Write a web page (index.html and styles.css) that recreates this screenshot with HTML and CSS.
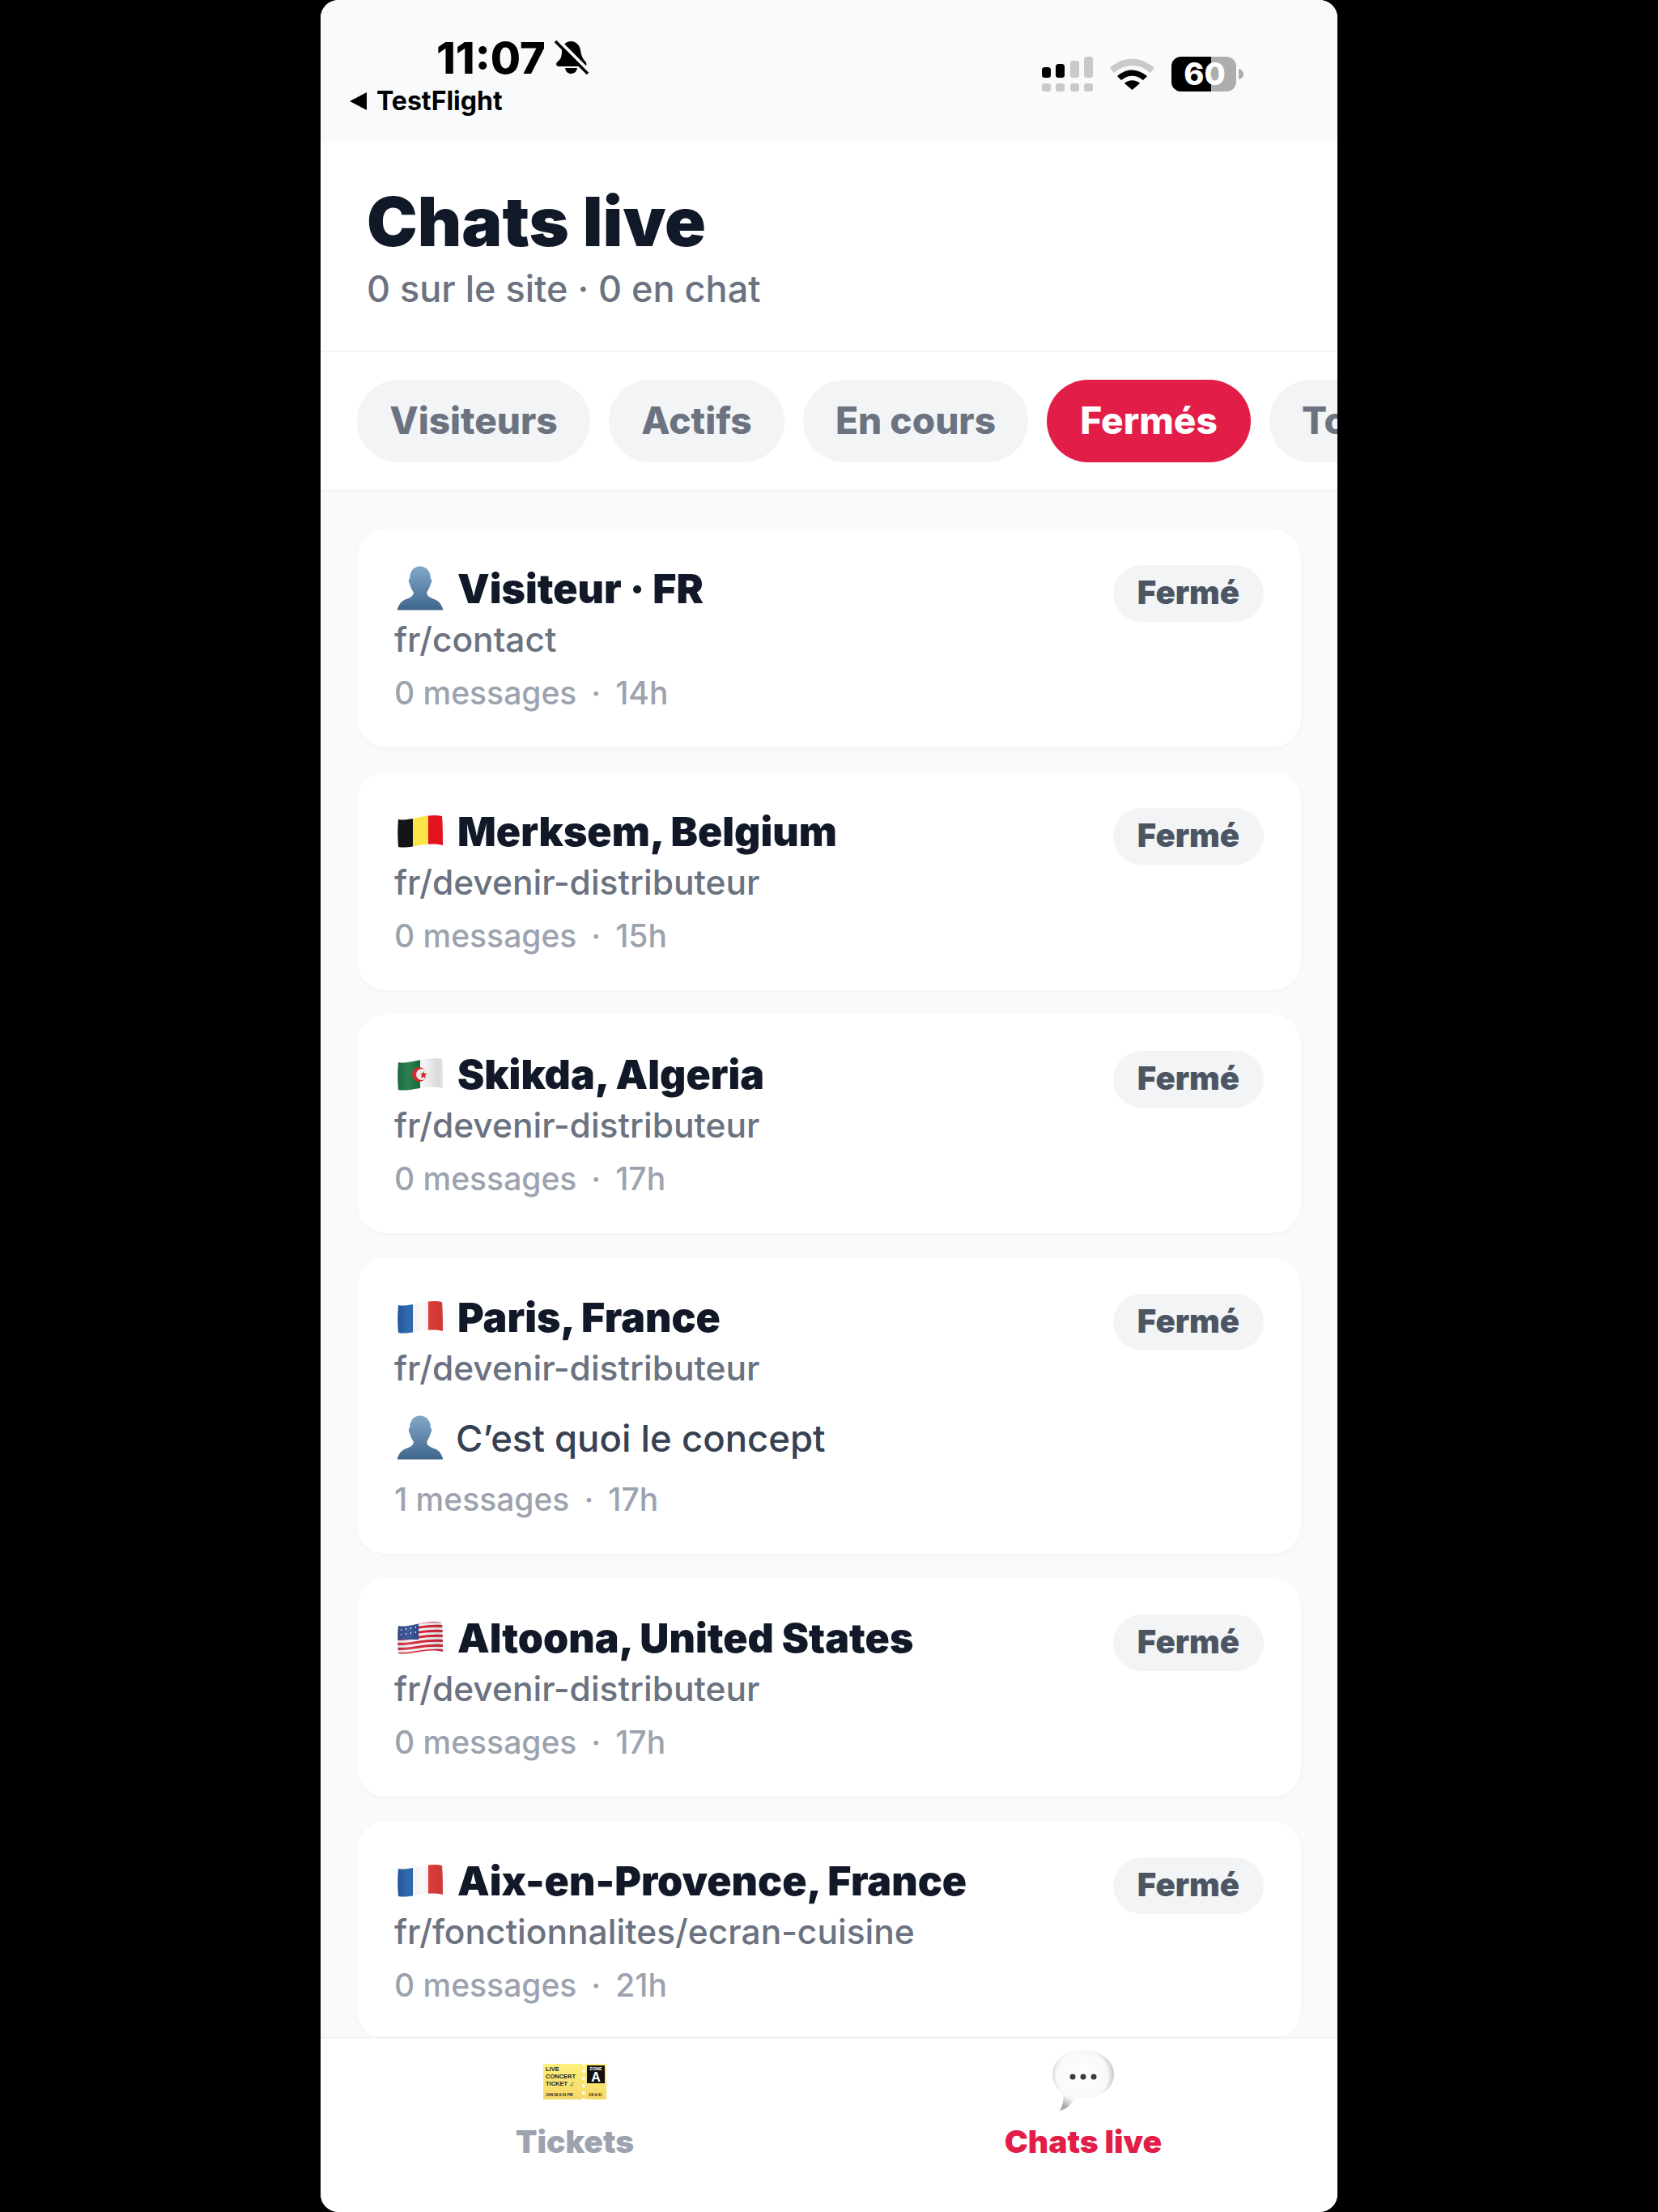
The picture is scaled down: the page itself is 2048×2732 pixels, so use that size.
FILE: index.html
```html
<!DOCTYPE html>
<html lang="fr">
<head>
    <meta charset="UTF-8">
    <title>Chats live</title>
    <link rel="stylesheet" href="styles.css">
</head>
<body>
    <svg class="defs" width="0" height="0">
        <defs>
            <linearGradient id="personGrad" x1="0" y1="0" x2="0" y2="1">
                <stop offset="0" stop-color="#82a9c9"/>
                <stop offset="1" stop-color="#3f668c"/>
            </linearGradient>
            <radialGradient id="bubbleGrad" cx="0.48" cy="0.42" r="0.58">
                <stop offset="0" stop-color="#ffffff"/>
                <stop offset="0.72" stop-color="#f8f8f8"/>
                <stop offset="1" stop-color="#a9a9a9"/>
            </radialGradient>
            <linearGradient id="ticketGrad" x1="0" y1="0" x2="0" y2="1">
                <stop offset="0" stop-color="#fdf07c"/>
                <stop offset="1" stop-color="#f6d868"/>
            </linearGradient>
            <linearGradient id="flagShade" x1="0" y1="0" x2="1" y2="0">
                <stop offset="0" stop-color="#000" stop-opacity="0.18"/>
                <stop offset="0.3" stop-color="#fff" stop-opacity="0.1"/>
                <stop offset="0.55" stop-color="#000" stop-opacity="0"/>
                <stop offset="0.85" stop-color="#000" stop-opacity="0.12"/>
                <stop offset="1" stop-color="#000" stop-opacity="0.04"/>
            </linearGradient>
            <clipPath id="wave">
                <path d="M5 9C20 12 38 1 59 5C60 16 60 30 60 41C38 36 20 46 5 43C4 32 4 20 5 9Z"/>
            </clipPath>
            <symbol id="person" viewBox="-3 0 70 62">
                <path fill="url(#personGrad)" d="M32 1C41 1 46 8 46 17C48 18 48 22 46 25C45 29 43 33 41 36C41 41 45 43 50 45C57 47 61 52 63 60H1C3 52 7 47 14 45C19 43 23 41 23 36C21 33 19 29 18 25C16 22 16 18 18 17C18 8 23 1 32 1Z"/>
            </symbol>
            <symbol id="flag-be" viewBox="0 0 64 48">
                <g clip-path="url(#wave)">
                    <rect width="23" height="48" fill="#141414"/>
                    <rect x="23" width="19" height="48" fill="#fde547"/>
                    <rect x="42" width="22" height="48" fill="#e2131f"/>
                </g>
            </symbol>
            <symbol id="flag-dz" viewBox="0 0 64 48">
                <g clip-path="url(#wave)">
                    <rect width="32" height="48" fill="#14713c"/>
                    <rect x="32" width="32" height="48" fill="#f6f6f6"/>
                    <circle cx="31" cy="24" r="9" fill="#d8232a"/>
                    <circle cx="34" cy="24" r="7" fill="#eef3ee"/>
                    <path d="M36 20l1.500 3 3.500 0-3 2 1 4-3-2-3 2 1-4-2-2 3 0z" fill="#d8232a"/>
                    <rect width="64" height="48" fill="url(#flagShade)"/>
                </g>
            </symbol>
            <symbol id="flag-fr" viewBox="0 0 64 48">
                <g clip-path="url(#wave)">
                    <rect width="23" height="48" fill="#1b5aa6"/>
                    <rect x="23" width="19" height="48" fill="#fafafa"/>
                    <rect x="42" width="22" height="48" fill="#e8403c"/>
                    <rect width="64" height="48" fill="url(#flagShade)"/>
                </g>
            </symbol>
            <symbol id="flag-us" viewBox="0 0 64 48">
                <g clip-path="url(#wave)">
                    <rect width="64" height="48" fill="#f4f4f4"/>
                    <path d="M0 7C20 10 38 0 64 4M0 13C20 16 38 6 64 10M0 19C20 22 38 12 64 16M0 25C20 28 38 18 64 22M0 31C20 34 38 24 64 28M0 37C20 40 38 30 64 34M0 43C20 46 38 36 64 40" fill="none" stroke="#d8283a" stroke-width="3"/>
                    <rect width="30" height="26" fill="#2b4a8f"/>
                    <path d="M8 14h1M14 13h1M20 12h1M26 11h1M8 20h1M14 19h1M20 18h1M26 17h1" stroke="#fff" stroke-width="2"/>
                    <rect width="64" height="48" fill="url(#flagShade)"/>
                </g>
            </symbol>
        </defs>
    </svg>

    <div class="phone">
        <div class="status">
            <div class="status-left">
                <div class="clock-row">
                    <span class="clock">11:07</span>
                    <svg class="bell" viewBox="0 0 44 44">
                        <path d="M21 2C27 2 32 6 33 13C34 20 36 24 39 27C41 29 41 33 38 33H6C3 33 2 29 5 27C9 24 10 20 10 14C10 7 15 2 21 2Z"/>
                        <path d="M14 35H29C28 40 25 42 21 42C18 42 15 40 14 35Z"/>
                        <path class="bell-gap" d="M5 0L45 40"/>
                        <path class="bell-slash" d="M2 2L42 42"/>
                    </svg>
                </div>
                <div class="back-row">
                    <span class="back-arrow"></span>
                    <span>TestFlight</span>
                </div>
            </div>
            <svg class="status-right" width="250" height="56" viewBox="0 0 250 56">
                <g fill="#000">
                    <rect x="0" y="13" width="11" height="13" rx="3.500"/>
                    <rect x="17" y="9" width="11" height="17" rx="3.500"/>
                </g>
                <g fill="#c9c9c9">
                    <rect x="35" y="5" width="11" height="21" rx="3"/>
                    <rect x="52" y="0" width="11" height="26" rx="3"/>
                    <rect x="0" y="33" width="11" height="10" rx="3"/>
                    <rect x="17" y="33" width="11" height="10" rx="3"/>
                    <rect x="35" y="33" width="11" height="10" rx="3"/>
                    <rect x="52" y="33" width="11" height="10" rx="3"/>
                </g>
                <path d="M84 14C100 -1 122 -1 139 14L134 20C120 8 103 8 89 20Z" fill="#c9c9c9"/>
                <path d="M93 24C104 14 118 14 130 24L125 29C116 22 107 22 98 29Z" fill="#000"/>
                <path d="M102 33C107 28 116 28 121 33L111.500 41Z" fill="#000"/>
                <rect x="160" y="0" width="80" height="43" rx="12" fill="#adadad"/>
                <path d="M172 0H209V43H172A12 12 0 0 1 160 31V12A12 12 0 0 1 172 0Z" fill="#000"/>
                <path d="M243 15C247 16 249 19 249 22C249 25 247 27 243 28Z" fill="#adadad"/>
                <text class="battery-text" x="201" y="35" text-anchor="middle">60</text>
            </svg>
        </div>

        <header class="top">
            <h1>Chats live</h1>
            <p>0 sur le site · 0 en chat</p>
        </header>

        <nav class="filters">
            <button class="chip">Visiteurs</button>
            <button class="chip">Actifs</button>
            <button class="chip">En cours</button>
            <button class="chip chip-on">Fermés</button>
            <button class="chip">Tous</button>
        </nav>

        <main class="list">
            <article class="card">
                <div class="card-head">
                    <div class="title">
                        <svg class="emoji person-big"><use href="#person"/></svg>
                        <span>Visiteur · FR</span>
                    </div>
                    <span class="badge">Fermé</span>
                </div>
                <div class="path">fr/contact</div>
                <div class="meta"><span>0 messages</span><i>·</i><span>14h</span></div>
            </article>

            <article class="card">
                <div class="card-head">
                    <div class="title">
                        <svg class="emoji"><use href="#flag-be"/></svg>
                        <span>Merksem, Belgium</span>
                    </div>
                    <span class="badge">Fermé</span>
                </div>
                <div class="path">fr/devenir-distributeur</div>
                <div class="meta"><span>0 messages</span><i>·</i><span>15h</span></div>
            </article>

            <article class="card">
                <div class="card-head">
                    <div class="title">
                        <svg class="emoji"><use href="#flag-dz"/></svg>
                        <span>Skikda, Algeria</span>
                    </div>
                    <span class="badge">Fermé</span>
                </div>
                <div class="path">fr/devenir-distributeur</div>
                <div class="meta"><span>0 messages</span><i>·</i><span>17h</span></div>
            </article>

            <article class="card">
                <div class="card-head">
                    <div class="title">
                        <svg class="emoji"><use href="#flag-fr"/></svg>
                        <span>Paris, France</span>
                    </div>
                    <span class="badge">Fermé</span>
                </div>
                <div class="path">fr/devenir-distributeur</div>
                <div class="message">
                    <svg class="emoji person-big"><use href="#person"/></svg>
                    <span>C’est quoi le concept</span>
                </div>
                <div class="meta"><span>1 messages</span><i>·</i><span>17h</span></div>
            </article>

            <article class="card">
                <div class="card-head">
                    <div class="title">
                        <svg class="emoji"><use href="#flag-us"/></svg>
                        <span>Altoona, United States</span>
                    </div>
                    <span class="badge">Fermé</span>
                </div>
                <div class="path">fr/devenir-distributeur</div>
                <div class="meta"><span>0 messages</span><i>·</i><span>17h</span></div>
            </article>

            <article class="card">
                <div class="card-head">
                    <div class="title">
                        <svg class="emoji"><use href="#flag-fr"/></svg>
                        <span>Aix-en-Provence, France</span>
                    </div>
                    <span class="badge">Fermé</span>
                </div>
                <div class="path">fr/fonctionnalites/ecran-cuisine</div>
                <div class="meta"><span>0 messages</span><i>·</i><span>21h</span></div>
            </article>
        </main>

        <footer class="tabbar">
            <div class="tab">
                <svg class="tab-icon" viewBox="0 0 80 80">
                    <rect x="1" y="19" width="78" height="44" fill="url(#ticketGrad)"/>
                    <rect x="55" y="21" width="22" height="22" fill="#111"/>
                    <text class="tk tk-zone" x="66" y="27">ZONE</text>
                    <text class="tk tk-a" x="66" y="41">A</text>
                    <text class="tk" x="4" y="28" text-anchor="start">LIVE</text>
                    <text class="tk" x="4" y="37" text-anchor="start">CONCERT</text>
                    <text class="tk" x="4" y="46" text-anchor="start">TICKET ♫</text>
                    <text class="tk tk-small" x="4" y="59" text-anchor="start">JAN 09  9:41 PM</text>
                    <text class="tk tk-small" x="57" y="59" text-anchor="start">1/9  9:41</text>
                    <g fill="#fff">
                        <circle cx="51" cy="19" r="2"/>
                        <circle cx="51" cy="28" r="2"/>
                        <circle cx="51" cy="37" r="2"/>
                        <circle cx="51" cy="46" r="2"/>
                        <circle cx="51" cy="55" r="2"/>
                        <circle cx="51" cy="63" r="2"/>
                    </g>
                </svg>
                <span class="tab-label">Tickets</span>
            </div>
            <div class="tab tab-on">
                <svg class="tab-icon" viewBox="0 0 80 80">
                    <path fill="url(#bubbleGrad)" d="M40 2C61 2 78 15 78 32C78 49 61 62 40 62C36 62 32 62 29 61C26 68 20 75 11 77C15 71 16 63 15 56C7 50 2 42 2 32C2 15 19 2 40 2Z"/>
                    <circle cx="27" cy="35" r="3.500" fill="#3c3c3c"/>
                    <circle cx="40" cy="35" r="3.500" fill="#3c3c3c"/>
                    <circle cx="53" cy="35" r="3.500" fill="#3c3c3c"/>
                </svg>
                <span class="tab-label">Chats live</span>
            </div>
        </footer>
    </div>
</body>
</html>
```

FILE: styles.css
```css
* {
    box-sizing: border-box;
}
html, body {
    margin: 0;
    height: 100%;
    background: #000;
}
body {
    display: flex;
    justify-content: center;
    font-family: Inter, "Noto Sans", sans-serif;
}
.defs {
    position: absolute;
}
.phone {
    width: 1256px;
    height: 2732px;
    background: #f9fafb;
    border-radius: 22px;
    overflow: hidden;
    display: flex;
    flex-direction: column;
}

/* status bar */
.status {
    height: 176px;
    flex-shrink: 0;
    background: #f9fafb;
    display: flex;
    justify-content: space-between;
    padding: 42px 115px 0 36px;
}
.clock-row {
    display: flex;
    align-items: center;
    gap: 10px;
    padding-left: 107px;
    height: 58px;
}
.clock {
    font-size: 54px;
    font-weight: 800;
    color: #000;
}
.bell {
    width: 44px;
    height: 44px;
}
.bell-gap {
    stroke: #f9fafb;
    stroke-width: 4;
}
.bell-slash {
    stroke: #000;
    stroke-width: 3.500;
}
.back-row {
    display: flex;
    align-items: center;
    gap: 12px;
    margin-top: 5px;
    font-size: 32px;
    font-weight: 700;
    color: #000;
}
.back-arrow {
    width: 0;
    height: 0;
    border-top: 11px solid transparent;
    border-bottom: 11px solid transparent;
    border-right: 21px solid #000;
}
.status-right {
    margin-top: 28px;
}
.battery-text {
    font-family: Inter, sans-serif;
    font-size: 38px;
    font-weight: 800;
    fill: #fff;
}

/* header */
.top {
    height: 259px;
    flex-shrink: 0;
    background: #fff;
    border-bottom: 2px solid #f3f4f6;
    padding: 47px 57px 0;
}
.top h1 {
    margin: 0;
    font-size: 84px;
    font-weight: 900;
    line-height: 102px;
    color: #111827;
}
.top p {
    margin: 0;
    font-size: 45px;
    line-height: 64px;
    font-weight: 500;
    color: #6b7280;
}

/* filter chips */
.filters {
    height: 172px;
    flex-shrink: 0;
    background: #fff;
    border-bottom: 2px solid #f3f4f6;
    padding: 34px 0 0 45px;
    display: flex;
    gap: 23px;
    overflow: hidden;
}
.chip {
    flex-shrink: 0;
    height: 102px;
    padding: 0 0 3px;
    width: 288px;
    border: none;
    border-radius: 51px;
    background: #f3f4f6;
    color: #6b7280;
    font-family: inherit;
    font-size: 46px;
    font-weight: 800;
    white-space: nowrap;
}
.chip:nth-child(2) {
    width: 217px;
}
.chip:nth-child(3) {
    width: 278px;
}
.chip:nth-child(4) {
    width: 252px;
}
.chip:nth-child(5) {
    width: auto;
    padding: 0 40px 3px;
}
.chip-on {
    background: #e11d48;
    color: #fff;
}

/* list */
.list {
    flex: 1;
    min-height: 0;
    overflow: hidden;
    padding: 46px 45px 0;
    display: flex;
    flex-direction: column;
    gap: 30px;
}
.card {
    flex-shrink: 0;
    background: #fff;
    border-radius: 36px;
    padding: 44px 46px 40px;
    box-shadow: 0 2px 6px rgba(0, 0, 0, 0.03);
}
.card-head {
    display: flex;
    justify-content: space-between;
    align-items: flex-start;
}
.title {
    display: flex;
    align-items: center;
    gap: 14px;
    height: 60px;
    font-size: 50px;
    font-weight: 900;
    color: #111827;
}
.emoji {
    width: 64px;
    height: 48px;
    flex-shrink: 0;
}
.person-big {
    height: 60px;
}
.badge {
    height: 70px;
    margin: 1px 0 -32px;
    padding: 0 30px;
    border-radius: 35px;
    background: #f3f4f6;
    color: #4b5563;
    font-size: 40px;
    font-weight: 900;
    line-height: 68px;
}
.path {
    margin-top: 3px;
    font-size: 42.500px;
    line-height: 60px;
    font-weight: 500;
    color: #6b7280;
}
.message {
    display: flex;
    align-items: center;
    gap: 12px;
    margin: 26px 0 19px;
    height: 60px;
    font-size: 45.500px;
    font-weight: 500;
    color: #374151;
}
.message + .meta {
    margin-top: 0;
}
.meta {
    display: flex;
    align-items: center;
    gap: 18px;
    margin-top: 9px;
    font-size: 39px;
    line-height: 54px;
    font-weight: 500;
    color: #9ca3af;
}
.meta i {
    font-style: normal;
}

/* bottom tabs */
.tabbar {
    height: 217px;
    flex-shrink: 0;
    background: #fff;
    border-top: 3px solid #f3f4f6;
    display: flex;
    position: relative;
}
.tab {
    flex: 1;
    display: flex;
    flex-direction: column;
    align-items: center;
    padding-top: 12px;
}
.tab-icon {
    width: 80px;
    height: 80px;
}
.tab-label {
    margin-top: 10px;
    font-size: 39px;
    line-height: 50px;
    font-weight: 900;
    color: #9ca3af;
}
.tab-on .tab-label {
    color: #e11d48;
}
.tk {
    font-family: "Liberation Sans", sans-serif;
    font-size: 7.500px;
    font-weight: 700;
    fill: #222;
}
.tk-zone {
    font-size: 5.500px;
    fill: #fff;
    text-anchor: middle;
}
.tk-a {
    font-size: 16px;
    fill: #fff;
    text-anchor: middle;
}
.tk-small {
    font-size: 4.500px;
}
```
